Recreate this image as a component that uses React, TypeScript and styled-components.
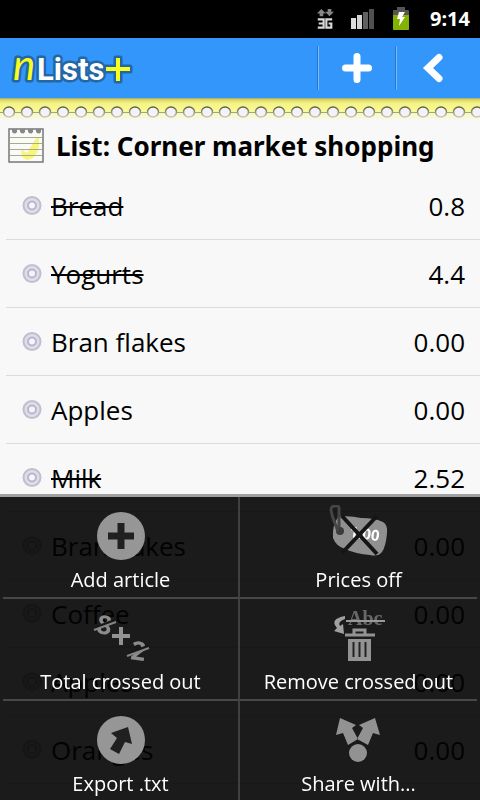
import React from "react";
import styled, { createGlobalStyle } from "styled-components";

const GlobalStyle = createGlobalStyle`
  *, *::before, *::after { box-sizing: border-box; }
  body {
    margin: 0;
    background: #f8f8f8;
    color: #000;
    font-family: "Open Sans", "Noto Sans", sans-serif;
    overflow: hidden;
  }
  button { font: inherit; border: 0; padding: 0; cursor: pointer; }
`;

const Screen = styled.div`
  height: 100vh;
  overflow: hidden;
  background: #f8f8f8;
`;

const StatusBar = styled.div`
  height: 38px;
  display: flex;
  align-items: center;
  justify-content: flex-end;
  background: #000;
  padding-right: 10px;
`;

const Clock = styled.time`
  width: 44px;
  text-align: right;
  color: #fff;
  font-size: 20px;
  font-weight: 700;
  line-height: 38px;
  font-family: "Noto Sans", sans-serif;
`;

const Header = styled.header`
  height: 60px;
  display: flex;
  align-items: center;
  background: #3296fa;
`;

const Brand = styled.h1`
  margin: 0;
  flex: 1;
  display: flex;
  font-weight: 400;
`;

const HeaderButton = styled.button<{ $width: number }>`
  width: ${(p) => p.$width}px;
  height: 44px;
  display: flex;
  align-items: center;
  justify-content: center;
  background: transparent;
  border-left: 1px solid #2876c6;
  box-shadow: inset 1px 0 #79bcff;
`;

const Binding = styled.div`
  height: 22px;
  display: flex;
  background: linear-gradient(#a8a860 0, #d9d96c 2px, #f3f384 5px, #f8f890 11px, #f8f8b0 15px, #f8f8f8 22px);
`;

const TitleRow = styled.div`
  height: 52px;
  display: flex;
  align-items: center;
  gap: 12px;
  padding-left: 8px;
`;

const Title = styled.h2`
  margin: 0;
  font-family: "Noto Sans", sans-serif;
  font-size: 26px;
  line-height: 52px;
  font-weight: 700;
  white-space: nowrap;
`;

const Articles = styled.ul`
  margin: 0;
  padding: 0 0 0 6px;
  list-style: none;
`;

const Article = styled.li`
  height: 68px;
  display: flex;
  align-items: center;
  gap: 9px;
  padding: 0 15px 0 16px;
  border-bottom: 1px solid #dcdcdc;
  font-size: 26px;
  line-height: 36px;
`;

const ArticleName = styled.span`
  flex: 1;
`;

const Crossed = styled.s`
  text-decoration-thickness: 2px;
`;

const Price = styled.span`
  text-align: right;
`;

const Menu = styled.nav`
  position: fixed;
  left: 0;
  right: 0;
  bottom: 0;
  display: grid;
  grid-template-columns: 1fr 1fr;
  padding: 0 3px;
  border-top: 3px solid #a0a0a0;
  background: rgba(2, 2, 2, 0.9);
`;

const MenuItem = styled.button<{ $left: boolean; $last: boolean }>`
  height: ${(p) => (p.$last ? 99 : 102)}px;
  display: flex;
  flex-direction: column;
  align-items: center;
  background: transparent;
  color: #fff;
  padding-top: 8px;
  border-bottom: ${(p) => (p.$last ? "0" : "2px solid #484848")};
  border-right: ${(p) => (p.$left ? "2px solid #404040" : "0")};
`;

const MenuLabel = styled.span`
  font-size: 20px;
  line-height: 26px;
  white-space: nowrap;
`;

const Network = () => (
  <svg width="18" height="26" viewBox="0 0 20 26" aria-label="3G">
    <path d="M6 2 1 7h3v3h4V7h3zM15 10l5-5h-3V2h-4v3h-3z" fill="#858585" />
    <path d="M2 13.500h6.500v9H2M3 18h5.500M18 13.500h-6.500v9H17v-4.500h-3" fill="none" stroke="#d8d8d8" strokeWidth="2.400" />
  </svg>
);

const Signal = () => (
  <svg width="26" height="24" viewBox="0 0 26 24">
    <path d="M1 11h5v11H1z" fill="#ddd" />
    <path d="M7 8h5v14H7z" fill="#d4d4d4" />
    <path d="M13 5h5v17h-5z" fill="#606060" />
    <path d="M19 2h5v20h-5z" fill="#505050" />
  </svg>
);

const Battery = () => (
  <svg width="18" height="24" viewBox="0 0 18 24">
    <path d="M5 0h8v3h3q1 0 1 1v18q0 1-1 1H2q-1 0-1-1V4q0-1 1-1h3z" fill="#555" />
    <path d="M1 8h16v14q0 1-1 1H2q-1 0-1-1z" fill="#83b300" />
    <path d="M7 5h6l-3 5h3l-6 9 1-7H5z" fill="#fff" />
  </svg>
);

const StatusIcons = styled.div`
  display: flex;
  align-items: center;
  gap: 16px;
`;

const Logo = () => (
  <svg width="140" height="54" viewBox="0 0 140 54" role="img" aria-label="nLists+">
    <g stroke="#2367a5" strokeWidth="5" strokeLinejoin="round" paintOrder="stroke">
      <text x="13" y="39" fill="#f8ff20" fontFamily="Lato, sans-serif" fontStyle="italic" fontWeight="400" fontSize="42">n</text>
      <text x="37" y="39" fill="#fff" fontFamily="Roboto, sans-serif" fontWeight="700" fontSize="31">Lists</text>
      <path d="M116 17h4v9h10v4h-10v10h-4v-10h-10v-4h10z" fill="#f8ff20" />
    </g>
  </svg>
);

const Plus = () => (
  <svg width="34" height="34" viewBox="0 0 34 34">
    <path d="M17 5.500v23M5.500 17h23" stroke="#fff" strokeWidth="7" strokeLinecap="round" />
  </svg>
);

const Back = () => (
  <svg width="38" height="34" viewBox="0 0 38 34">
    <path d="M20 6.500 9 17l11 10.500" fill="none" stroke="#fff" strokeWidth="7" strokeLinecap="round" />
  </svg>
);

const Holes = () => (
  <svg width="100%" height="22">
    <defs>
      <linearGradient id="rim" x1="0" y1="0" x2="0" y2="1">
        <stop offset="0" stopColor="#5d5d48" />
        <stop offset="1" stopColor="#c9c9bc" />
      </linearGradient>
      <pattern id="hole" width="18" height="22" patternUnits="userSpaceOnUse">
        <path d="M0 14.500h18" stroke="#a3a38a" />
        <ellipse cx="9" cy="14" rx="5.500" ry="5" fill="#f4f2f6" stroke="url(#rim)" strokeWidth="1.500" />
      </pattern>
    </defs>
    <rect width="100%" height="22" fill="url(#hole)" />
  </svg>
);

const Notepad = () => (
  <svg width="36" height="36" viewBox="0 0 36 36">
    <rect x="1" y="1" width="34" height="33" fill="#fafaf6" stroke="#777" strokeWidth="1.500" />
    <path d="m14 22 5 3 9-15 3-1v9q-2 12-11 14-7-1-7-9z" fill="#f8f67a" />
    <path d="M2 9.500h32M2 15.500h32M2 21.500h32M2 27.500h32" stroke="#aaa996" />
    <path d="M4 1h5v3q-2 3-5 0zM12 1h5v3q-2 3-5 0zM20 1h5v3q-2 3-5 0zM28 1h5v3q-2 3-5 0z" fill="#888" />
  </svg>
);

const Bullet = () => (
  <svg width="20" height="22" viewBox="0 0 20 22">
    <circle cx="10" cy="10.500" r="8.500" fill="#deddea" stroke="#c0bfcd" strokeWidth="2" />
    <circle cx="10" cy="10.500" r="4" fill="#f5f4fa" stroke="#b9b6ce" strokeWidth="2" />
  </svg>
);

const AddIcon = () => (
  <svg width="62" height="62" viewBox="0 0 62 62">
    <circle cx="31" cy="31" r="24" fill="#969696" />
    <path d="M27.500 18h7v9.500H44v7h-9.500V44h-7v-9.500H18v-7h9.500z" fill="#202020" />
  </svg>
);

const PricesIcon = () => (
  <svg width="62" height="62" viewBox="0 0 62 62">
    <path d="M10 12q10-2 23 1 14 0 22 4 5 3 4 11-1 13-5 19-4 5-12 3-14-1-25-6-9-3-12-11-1-12 5-21z" fill="#909090" />
    <circle cx="12" cy="26" r="4" fill="#3b3b3b" />
    <path d="M10 26C6 16 1 4 4 2q6-3 7 1v19" fill="none" stroke="#454545" strokeWidth="3" />
    <text x="21" y="32" fill="#fff" fontFamily="Open Sans, sans-serif" fontWeight="700" fontSize="15" transform="rotate(8 21 32)">1.00</text>
    <path d="m14 11 35 38M49 11 14 48" stroke="#151515" strokeWidth="4" />
  </svg>
);

const TotalIcon = () => (
  <svg width="62" height="62" viewBox="0 0 62 62">
    <g fill="#8c8c8c" fontFamily="Open Sans, sans-serif" fontWeight="700" fontSize="26">
      <text x="7" y="27" transform="rotate(8 14 18)">8</text>
      <text x="41" y="53" transform="rotate(8 48 44)">2</text>
    </g>
    <path d="M5 21 26 13M38 47l21-8" stroke="#181818" strokeWidth="3" />
    <path d="M4 23l22-8M37 49l22-8" stroke="#858585" strokeWidth="2" />
    <path d="M31 20v18M22 29h18" stroke="#929292" strokeWidth="4" />
  </svg>
);

const RemoveIcon = () => (
  <svg width="62" height="62" viewBox="0 0 62 62">
    <text x="20" y="18" fill="#686868" fontFamily="Liberation Serif, serif" fontWeight="700" fontSize="20">Abc</text>
    <path d="M18 14h39" stroke="#999" strokeWidth="2" />
    <path d="M17 9Q1 12 9 21l-3 3 10 3-1-10-3 2q-3-4 5-7z" fill="#a0a0a0" />
    <path d="M26 27v-4h11v4M17 28h30" fill="none" stroke="#939393" strokeWidth="3" />
    <path d="M20 32h23v22H20z" fill="#939393" />
    <path d="M25.500 35v15M31.500 35v15M37.500 35v15" stroke="#242424" strokeWidth="2" />
  </svg>
);

const ExportIcon = () => (
  <svg width="62" height="62" viewBox="0 0 62 62">
    <circle cx="31" cy="31" r="24" fill="#969696" />
    <path d="m38 18 4 17-7-2-6 12-9-5 7-11-6-5z" fill="#202020" />
  </svg>
);

const ShareIcon = () => (
  <svg width="62" height="62" viewBox="0 0 62 62">
    <path d="m12 9 16 7-4 3 6 11-10 6-5-12-7 2zM47 9 31 16l4 3-6 11 11 6 5-12 7 2z" fill="#929292" />
    <circle cx="30" cy="44" r="11" fill="#1a1a1a" />
    <circle cx="30" cy="44" r="9" fill="#929292" />
  </svg>
);

const articles = [
  { name: "Bread", price: "0.8", crossed: true },
  { name: "Yogurts", price: "4.4", crossed: true },
  { name: "Bran flakes", price: "0.00", crossed: false },
  { name: "Apples", price: "0.00", crossed: false },
  { name: "Milk", price: "2.52", crossed: true },
  { name: "Bran flakes", price: "0.00", crossed: false },
  { name: "Coffee", price: "0.00", crossed: false },
  { name: "Apples", price: "0.00", crossed: false },
  { name: "Oranges", price: "0.00", crossed: false },
];

const actions = [
  { label: "Add article", Icon: AddIcon },
  { label: "Prices off", Icon: PricesIcon },
  { label: "Total crossed out", Icon: TotalIcon },
  { label: "Remove crossed out", Icon: RemoveIcon },
  { label: "Export .txt", Icon: ExportIcon },
  { label: "Share with...", Icon: ShareIcon },
];

export default function App() {
  return (
    <Screen>
      <GlobalStyle />
      <StatusBar>
        <StatusIcons>
          <Network />
          <Signal />
          <Battery />
          <Clock>9:14</Clock>
        </StatusIcons>
      </StatusBar>
      <Header>
        <Brand><Logo /></Brand>
        <HeaderButton $width={78} aria-label="Add"><Plus /></HeaderButton>
        <HeaderButton $width={85} aria-label="Back"><Back /></HeaderButton>
      </Header>
      <Binding><Holes /></Binding>
      <main>
        <TitleRow>
          <Notepad />
          <Title>List: Corner market shopping</Title>
        </TitleRow>
        <Articles>
          {articles.map((a, i) => (
            <Article key={i}>
              <Bullet />
              <ArticleName>{a.crossed ? <Crossed>{a.name}</Crossed> : a.name}</ArticleName>
              <Price>{a.price}</Price>
            </Article>
          ))}
        </Articles>
      </main>
      <Menu aria-label="Options">
        {actions.map(({ label, Icon }, i) => (
          <MenuItem key={label} $left={i % 2 === 0} $last={i > 3}>
            <Icon />
            <MenuLabel>{label}</MenuLabel>
          </MenuItem>
        ))}
      </Menu>
    </Screen>
  );
}
